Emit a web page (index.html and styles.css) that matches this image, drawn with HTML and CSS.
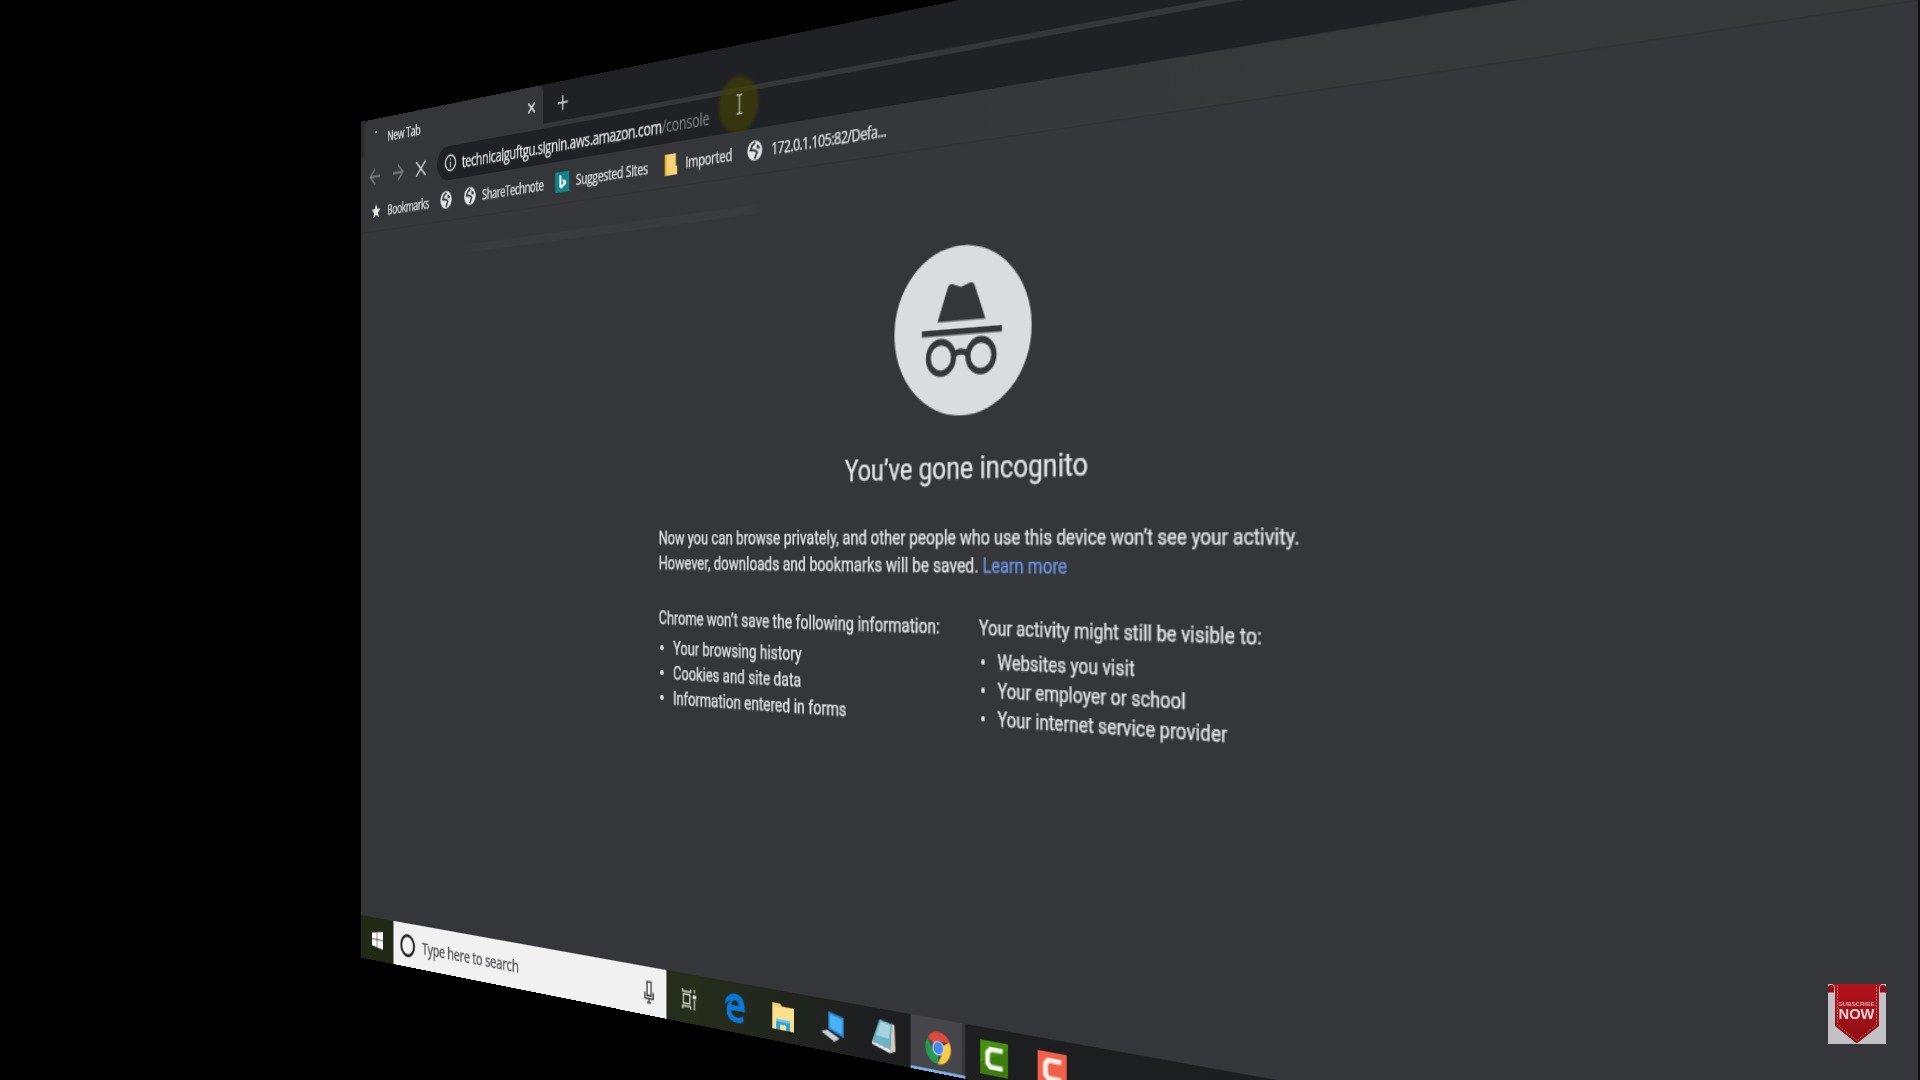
FILE: index.html
```html
<!DOCTYPE html>
<html lang="en">
<head>
<meta charset="utf-8">
<title>New Tab</title>
<link rel="stylesheet" href="styles.css">
</head>
<body>
<svg class="defs" width="0" height="0" aria-hidden="true">
  <symbol id="globe" viewBox="0 0 16 16">
    <circle cx="8" cy="8" r="7.7" fill="#e4e5e7"/>
    <path d="M8.500 1.800 5 4.200 3.600 7.200l4.600.6 2.200 1.700-2.600 4.700" fill="none" stroke="#3a3b3f" stroke-width="1.900"/>
    <path d="M10.500 3.200l3 2.600-1.300 1.600-2.700-1.600z" fill="#3a3b3f"/>
  </symbol>
</svg>
<div class="stage">
  <main class="screen">
    <div class="tabstrip">
      <div class="tab"><span class="dot"></span><span class="tab-title">New Tab</span>
        <svg class="tab-close" viewBox="0 0 12 12"><path d="M1.500 1.500l9 9M10.500 1.500l-9 9"/></svg>
      </div>
      <svg class="new-tab" viewBox="0 0 16 16"><path d="M8 1v14M1 8h14"/></svg>
    </div>
    <div class="toolbar">
      <svg class="nav dim" viewBox="0 0 16 16"><path d="M15 8H2M8 1.500 1.500 8 8 14.500"/></svg>
      <svg class="nav dim" viewBox="0 0 16 16"><path d="M1 8h13M8 1.500 14.500 8 8 14.500"/></svg>
      <svg class="nav" viewBox="0 0 16 16"><path d="M2 2l12 12M14 2 2 14"/></svg>
      <div class="omnibox">
        <svg class="info" viewBox="0 0 16 16"><circle cx="8" cy="8" r="6.800"/><path d="M8 7v5M8 4v1.600"/></svg>
        <span class="url">technicalguftgu.signin.aws.amazon.com<span class="path">/console</span></span>
        <span class="pointer"><svg viewBox="0 0 10 20"><path d="M1 1h3l1 .8L6 1h3M5 1.800v16.400M1 19h3l1-.8 1 .8h3"/></svg></span>
      </div>
    </div>
    <div class="bookmarks">
      <svg class="star" viewBox="0 0 16 16"><path d="M8 .8l2 5.100 5.400.3-4.200 3.400 1.400 5.300L8 11.900l-4.600 3 1.400-5.300L.6 6.200 6 5.900z"/></svg>
      <span class="bm b1">Bookmarks</span>
      <svg class="globe g1"><use href="#globe"/></svg>
      <svg class="globe g2"><use href="#globe"/></svg>
      <span class="bm b2">ShareTechnote</span>
      <svg class="bing" viewBox="0 0 17 17"><path d="M0 0h17v17H0z" fill="#128489"/><path d="M5 2.500l2.400.8v7.900l3.300-1.800-1.600-.8-1-2.400 5 1.700v2.600l-5.700 3.400L5 12.600z" fill="#fff"/></svg>
      <span class="bm b3">Suggested Sites</span>
      <svg class="folder" viewBox="0 0 14 17"><path d="M0 0h12.500v10H14v7H0z" fill="#f6d274"/><path d="M0 0h1.800v17H0z" fill="#dba51c"/></svg>
      <span class="bm b4">Imported</span>
      <svg class="globe g3"><use href="#globe"/></svg>
      <span class="bm b5">172.0.1.105:82/Defa...</span>
    </div>
    <section class="page">
      <svg class="spy" viewBox="0 0 120 120">
        <circle cx="60" cy="60" r="60" fill="#dadce0"/>
        <g fill="#35363a"><path d="M39 53 48.300 28.700q1.200-2.700 4-1.800l7.500 2.400 8-2.400q2.700-.8 3.800 1.800L81 53z"/><path d="M25 58.500h70v4.500H25z"/></g>
        <g fill="none" stroke="#35363a" stroke-width="4.500"><circle cx="42" cy="78.500" r="11.200"/><circle cx="77" cy="78.500" r="11.200"/><path d="M53 77q6.500-4.300 13 0"/></g>
      </svg>
      <h1>You’ve gone incognito</h1>
      <div class="copy">
        <p class="l1">Now you can browse privately, and other people who use this device won’t see your activity.</p>
        <p class="l2">However, downloads and bookmarks will be saved. <a>Learn more</a></p>
        <div class="cols">
          <div class="col"><p>Chrome won’t save the following information:</p>
            <ul><li>Your browsing history</li><li>Cookies and site data</li><li>Information entered in forms</li></ul></div>
          <div class="col"><p>Your activity might still be visible to:</p>
            <ul><li>Websites you visit</li><li>Your employer or school</li><li>Your internet service provider</li></ul></div>
        </div>
      </div>
    </section>
    <footer class="taskbar">
      <div class="start"><svg viewBox="0 0 16 16"><path d="M0 2.200 6.800 1.200v6.300H0zM7.600 1.100 16 0v7.500H7.600zM0 8.300h6.800v6.400L0 13.800zM7.600 8.300H16V16l-8.400-1.100z"/></svg></div>
      <div class="search">
        <svg class="cortana" viewBox="0 0 22 22"><circle cx="11" cy="11" r="9"/></svg>
        <span class="hint">Type here to search</span>
        <svg class="mic" viewBox="0 0 14 20"><path d="M4.500 1h5v12h-5zM2 10v5.500h10V10M7 15.500V19M4.500 19h5"/></svg>
      </div>
      <div class="item"><svg viewBox="0 0 20 20" fill="none" stroke="#dfe2da" stroke-width="1.400"><path d="M3 6h8v8H3zM2 1v2.500h10V1M2 19v-2.500h10V19M16.500 1v3M16.500 10v9"/><path d="M15 6.500h3v2h-3z" fill="#fff"/></svg></div>
      <div class="item"><svg class="big" viewBox="0 0 24 24"><path d="M1.500 11C2 4.500 6.500.8 12.300.8c6.600 0 10.200 4.700 10.200 10.200v3H8.300c.2 3.400 3 5 6.400 5 2.500 0 4.500-.6 6.500-1.800v4.500c-2 1.100-4.600 1.600-7.400 1.600C7.600 23.300 3.500 19.700 3.500 14.300c0-3.300 1.700-5.900 4.700-7.500C5.500 7 3.200 8.500 1.500 11zM8.400 10h7.800c0-2.500-1.200-4-3.700-4-2.300 0-3.800 1.600-4.100 4z" fill="#0a78d7"/></svg></div>
      <div class="item"><svg class="big" viewBox="0 0 24 24"><path d="M1 2h8l2 2h12v18H1z" fill="#f3cf72"/><path d="M3 5h20v17H1V7z" fill="#fbe08f"/><path d="M5 22v-8h14v8h-4v-4H9v4z" fill="#2fa3dd"/><path d="M5 14h14v2H5z" fill="#6cc5ee"/></svg></div>
      <div class="item"><svg class="big" viewBox="0 0 24 24"><path d="M8 1l15 3v15L8 14z" fill="#2386d8"/><path d="M9.500 3l12 2.500v11l-12-3.500z" fill="#4db1f5"/><path d="M1 17l6-2 12 5-5 3z" fill="#c9d0d6"/></svg></div>
      <div class="item"><svg class="big" viewBox="0 0 24 24"><path d="M19 1.500l3 1 1 19-5 2z" fill="#d9cfc0"/><path d="M8 0l12 2-2 18.500L1 17z" fill="#6fb3c4"/><path d="M9 1.500l9.500 1.500-2 10L5 12z" fill="#a9d5df"/><path d="M1 17l17 3.500V23.500L1 19z" fill="#e8eced"/></svg></div>
      <div class="item active"><svg class="big" viewBox="0 0 24 24"><path d="M12 12 2.500 5.300A11.500 11.500 0 0 1 22.400 7H12z" fill="#e04a3c"/><path d="M12 12l9.900-5.500A11.500 11.500 0 0 1 11.500 23.500L16 14.500z" fill="#f9cb43"/><path d="M12 12v11.500A11.500 11.500 0 0 1 2.300 5.800L7.500 14z" fill="#279a52"/><circle cx="12" cy="12" r="5.300" fill="#cfdcf2"/><circle cx="12" cy="12" r="4.400" fill="#4a86ea"/></svg></div>
      <div class="item"><svg class="big" viewBox="0 0 24 24"><path d="M0 0h24v24H0z" fill="#478f0e"/><path d="M0 16 24 4v20H0z" fill="#3c7d0b"/><path d="M19.500 7.500V4H8L4.500 7.500v9L8 20h11.500v-3.500H10L8.500 15V9L10 7.500z" fill="#f4f7ef"/></svg></div>
      <div class="item"><svg class="big" viewBox="0 0 24 24"><path d="M0 0h24v24H0z" fill="#f0604a"/><path d="M19.500 7.500V4H8L4.500 7.500v9L8 20h11.500v-3.500H10L8.500 15V9L10 7.500z" fill="#fbeeea"/></svg></div>
    </footer>
  </main>
  <svg class="subscribe" viewBox="0 0 58 60">
    <defs><linearGradient id="red" x1="0" y1="0" x2="0" y2="1"><stop offset="0" stop-color="#b3121c"/><stop offset=".55" stop-color="#a01119"/><stop offset="1" stop-color="#8c0b13"/></linearGradient></defs>
    <path d="M0 0h58v60H0z" fill="#c2c2c4"/>
    <path d="M0 8.500V4q0-3 3-3t3 3v4.500zM52 8.500V4q0-3 3-3t3 3v4.500z" fill="#8d0e16"/>
    <path d="M4 0h50q-3 1-3 5v37L28.800 59.500 7 42V5q0-4-3-5z" fill="url(#red)"/>
    <path d="M9.500 1v40l19.300 15.500L48.500 41V1" fill="none" stroke="#c9797d" stroke-width=".8" stroke-dasharray="2 1"/>
    <text x="10.500" y="22" textLength="36" lengthAdjust="spacingAndGlyphs" class="sub">SUBSCRIBE</text>
    <text x="10.500" y="35" textLength="36" lengthAdjust="spacingAndGlyphs" class="now">NOW</text>
  </svg>
</div>
</body>
</html>
```
FILE: styles.css
```css
* { box-sizing: border-box; }
body { margin: 0; background: #000; }
.defs { position: absolute; }
.stage {
  position: relative;
  width: 1920px;
  height: 1080px;
  overflow: hidden;
  background: #000;
  border-right: 2px solid #111;
}
/* 1366x768 desktop, turned about its left edge */
.screen {
  width: 1366px;
  height: 768px;
  display: flex;
  flex-direction: column;
  overflow: hidden;
  background: #35363a;
  color: #e1e2e5;
  font-family: "Open Sans", "Noto Sans", sans-serif;
  -webkit-text-stroke: 0.25px currentColor;
  transform-origin: 0 0;
  transform: matrix3d(0.5616, -0.1788, 0, -0.0003294, 0, 1.0878, 0, 0, 0, 0, 1, 0, 361, 122, 0, 1);
}
svg { flex: none; display: block; }
span { white-space: nowrap; }

.tabstrip { height: 33px; flex: none; display: flex; align-items: center; padding-left: 5px; background: linear-gradient(90deg, #2b2c2f 6px, #202124 6px); }
.tab { width: 241px; height: 33px; display: flex; align-items: center; padding-top: 2px; background: #35363a; border-radius: 6px 6px 0 0; }
.dot { width: 2px; height: 2px; margin: -12px 15px 0 16px; background: #aaa; }
.tab-title { font-size: 12px; letter-spacing: -0.3px; }
.tab-close { width: 11px; height: 11px; margin: 0 9px 0 auto; fill: none; stroke: #dfe0e2; stroke-width: 1.8; }
.new-tab { width: 14px; height: 14px; margin: 2px 0 0 17px; fill: none; stroke: #d4d5d7; stroke-width: 1.8; }

.toolbar { height: 35px; flex: none; display: flex; align-items: center; padding: 3px 0 0 12px; }
.nav { width: 17px; height: 17px; margin-right: 15.500px; fill: none; stroke: #c6c7ca; stroke-width: 1.7; }
.nav.dim { stroke: #77787c; }
.omnibox { position: relative; width: 1225px; height: 30px; margin: -1px 0 0 -2px; display: flex; align-items: center; padding: 1px 0 0 10px; border-radius: 15px; background: #202124; }
.info { width: 16px; height: 16px; fill: none; stroke: #d8d9db; stroke-width: 1.6; }
.url { margin-left: 8px; font-size: 14px; letter-spacing: -0.4px; color: #e6e7e9; }
.path { color: #85868a; -webkit-text-stroke-width: 0; }
.pointer { position: absolute; left: 338px; top: -15px; width: 46px; height: 48px; border-radius: 50%; display: flex; align-items: center; justify-content: center; background: radial-gradient(closest-side, rgba(66, 64, 0, 0.65) 82%, rgba(66, 64, 0, 0)); }
.pointer svg { width: 8px; height: 18px; margin-left: 3px; fill: none; stroke: #d8d8c8; stroke-width: 1.3; }

.bookmarks { height: 35px; flex: none; display: flex; align-items: center; padding: 0 0 2px 15px; background: linear-gradient(90deg, #35363a 45%, #373839 70%); border-bottom: 1px solid #303134; }
.star { width: 14px; height: 14px; fill: #eceded; }
.bm { flex: none; font-size: 12px; }
.b1 { width: 59px; margin-left: 9px; letter-spacing: -0.5px; }
.b2 { width: 78px; margin-left: 8px; letter-spacing: -0.45px; }
.b3 { width: 85px; margin-left: 8px; letter-spacing: -0.2px; }
.b4 { width: 50px; margin-left: 9px; letter-spacing: -0.25px; }
.b5 { margin-left: 9px; letter-spacing: -0.4px; }
.globe { width: 16px; height: 16px; }
.g1 { margin-left: 15px; }
.g2 { margin-left: 16px; }
.g3 { margin-left: 16px; }
.bing { width: 17px; height: 17px; margin-left: 15px; }
.folder { width: 14px; height: 17px; margin-left: 18px; }

.page { flex: 1; padding-top: 72px; background: linear-gradient(90deg, transparent 145px, rgba(255, 255, 255, 0.025) 170px, rgba(255, 255, 255, 0.025) 480px, transparent 495px) 0 23px / 100% 7px no-repeat; font-family: Roboto, sans-serif; }
.spy { width: 121px; height: 121px; margin-left: 622.500px; }
h1 { margin: 21.500px 0 0 576px; font-size: 22px; line-height: 32px; font-weight: 400; white-space: nowrap; }
.copy { margin: 23px 0 0 382.500px; font-size: 14px; line-height: 20px; letter-spacing: 0.02px; white-space: nowrap; }
.copy p { margin: 0; }
.copy a { color: #6c95e4; }
.cols { display: grid; grid-template-columns: 316.500px 317px; margin-top: 24px; }
ul { list-style: none; margin: 4.500px 0 0; padding: 0; }
li { display: flex; align-items: center; }
li::before { content: ""; width: 3.500px; height: 3.500px; margin: 0 11px 0 1.500px; border-radius: 50%; background: #e1e2e5; }

.taskbar { height: 39px; flex: none; display: flex; align-items: stretch; background: linear-gradient(90deg, #212a14 0, #262d1b 420px, #1d1f20 600px, #1a1b1d 100%); }
.start { width: 47.300px; display: flex; align-items: center; justify-content: center; }
.start svg { width: 16px; height: 16px; fill: #fff; }
.search { width: 344px; display: flex; align-items: center; padding: 0 13px 0 9px; background: #f1f1f2; color: #4c4c4f; }
.cortana { width: 22px; height: 22px; fill: none; stroke: #1d2020; stroke-width: 2.600; }
.hint { margin-left: 9px; font-size: 14.500px; letter-spacing: -0.3px; }
.mic { width: 13px; height: 19px; margin: 2px 0 0 auto; fill: none; stroke: #333; stroke-width: 1.500; }
.item { width: 49.350px; display: flex; align-items: center; justify-content: center; }
.item svg { width: 18px; height: 18px; }
.item svg.big { width: 24px; height: 24px; }
.item.active { padding-top: 4px; background: #46464a; border-bottom: 2px solid #76b0e4; box-shadow: inset -3px 0 #36373a; }
.item.active ~ .item { padding-top: 2px; }

.subscribe { position: absolute; left: 1828px; top: 984px; width: 58px; height: 60px; }
.sub { font: 700 6px "Liberation Sans", sans-serif; fill: #dba9ab; }
.now { font: 700 14.500px "Liberation Sans", sans-serif; fill: #e6d3d4; }
```
